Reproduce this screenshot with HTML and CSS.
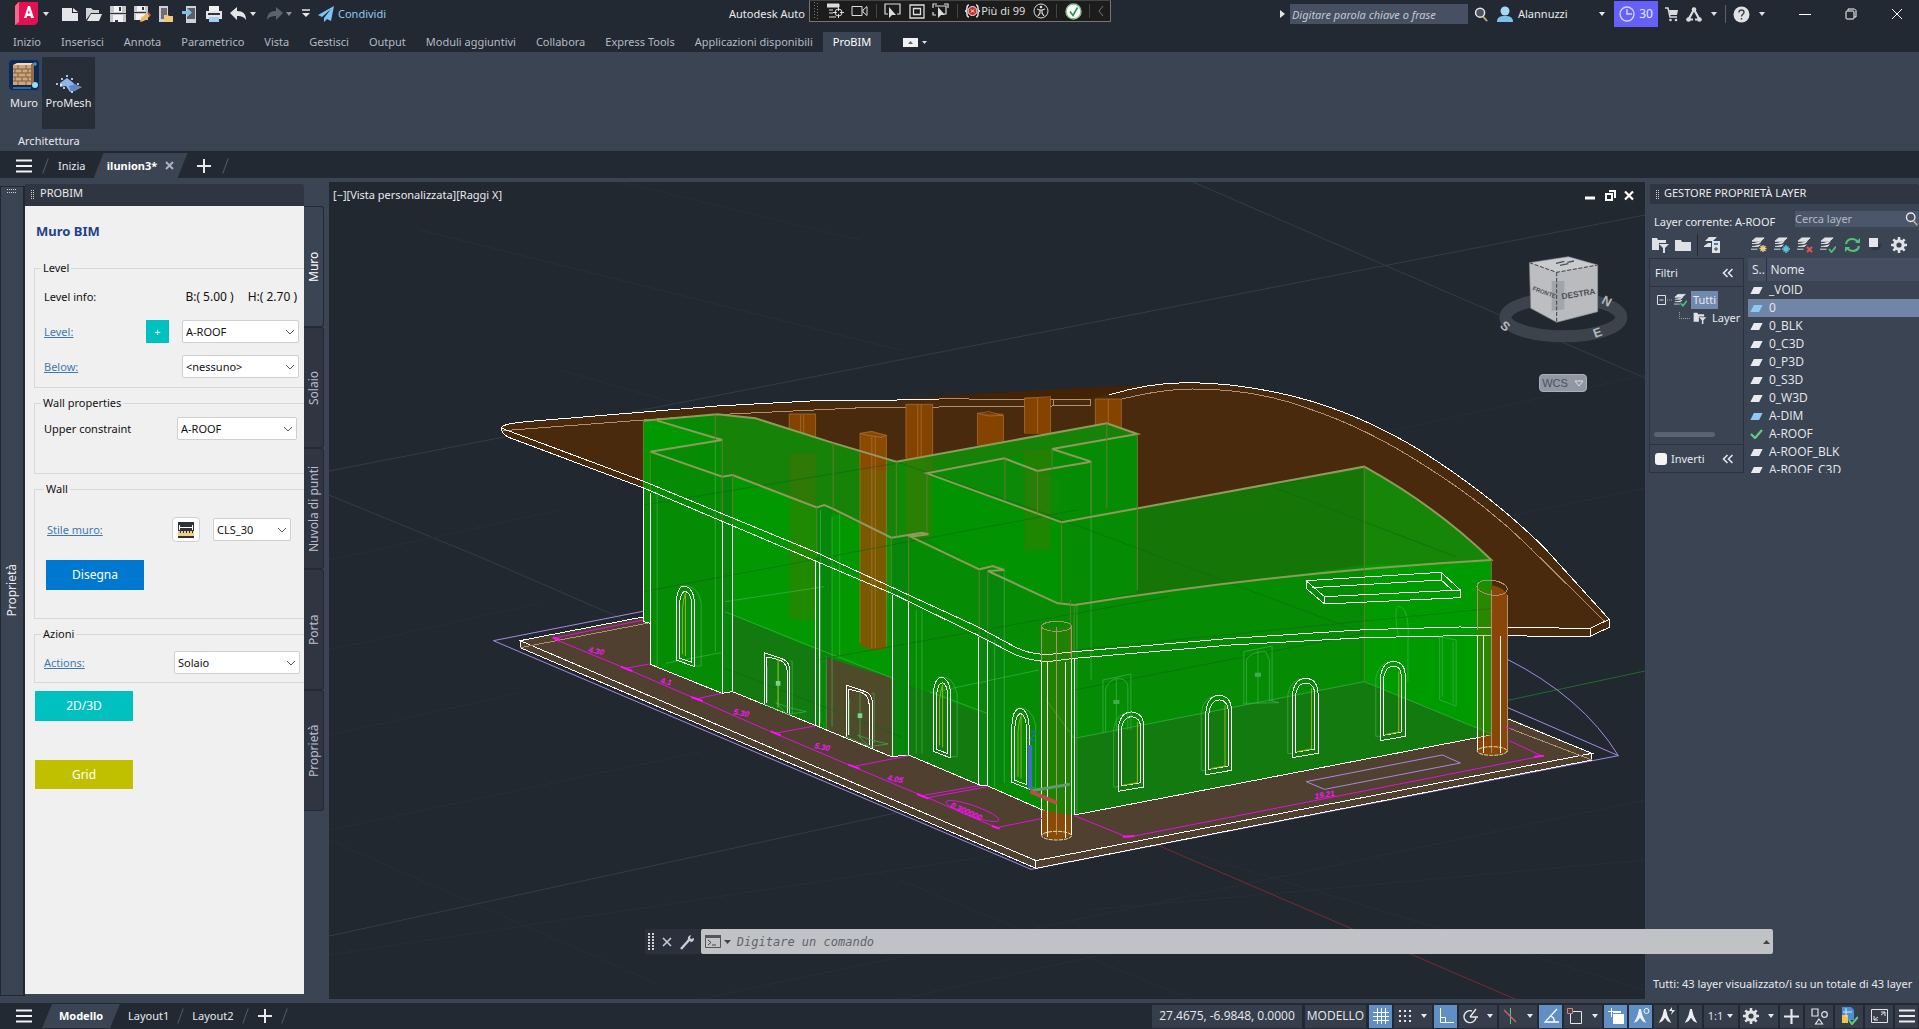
FILE: index.html
```html
<!DOCTYPE html>
<html lang="it">
<head>
<meta charset="utf-8">
<title>Autodesk AutoCAD - ilunion3</title>
<link rel="stylesheet" href="styles.css">
</head>
<body>
<svg class="defs" width="0" height="0" aria-hidden="true">
  <defs>
    <symbol id="tri" viewBox="0 0 8 8"><path d="M1 2h6L4 6z" fill="currentColor"/></symbol>
    <symbol id="menu" viewBox="0 0 16 16"><path d="M0 2.500h16M0 8h16M0 13.500h16" stroke="currentColor" stroke-width="2"/></symbol>
    <symbol id="plus" viewBox="0 0 14 14"><path d="M7 0v14M0 7h14" stroke="currentColor" stroke-width="2"/></symbol>
    <symbol id="chev" viewBox="0 0 10 6"><path d="M1 1l4 4 4-4" fill="none" stroke="#555" stroke-width="1"/></symbol>
    <symbol id="mag" viewBox="0 0 16 16"><path d="M9.500 10l4.500 5" stroke="#c9a27a" stroke-width="2"/><circle cx="6.500" cy="6" r="4.800" fill="#4a5260" stroke="#e4e6ea" stroke-width="1.600"/></symbol>
    <symbol id="dbl" viewBox="0 0 12 10"><path d="M5.500 1L1.500 5l4 4M10.500 1l-4 4 4 4" fill="none" stroke="#e4e6ea" stroke-width="1.600"/></symbol>
    <symbol id="sheet" viewBox="0 0 14 8"><path d="M4 0h10L10 8H0z" fill="currentColor"/></symbol>
    <symbol id="stack" viewBox="0 0 16 16"><path d="M5 1h9l-4 3.500H1zM1 7h7l3-2.500M1 10h7l2-2M0 13h7" fill="#e0e2e6" stroke="#e0e2e6" stroke-width="1"/></symbol>
    <symbol id="folder" viewBox="0 0 16 16"><path d="M0 3h6l1 2h9v9H0z" fill="#dfe1e5"/></symbol>
    <symbol id="gear" viewBox="0 0 16 16"><circle cx="8" cy="8" r="4.200" fill="none" stroke="#e0e2e6" stroke-width="3.200"/><path d="M8 0v3M8 13v3M0 8h3M13 8h3M2.300 2.300l2.200 2.200M11.500 11.500l2.200 2.200M2.300 13.700l2.200-2.200M11.500 4.500l2.200-2.200" stroke="#e0e2e6" stroke-width="2.500"/></symbol>
    <symbol id="compass" viewBox="0 0 18 18"><path d="M8 1h2l2 8 4 8-4-2-3-4-3 4-4 2 4-8z" fill="#eceef1"/></symbol>
  </defs>
</svg>

<div class="app">
  <header class="titlebar">
    <div class="quick">
      <button class="logo" aria-label="Menu applicazione"><svg width="24" height="26" viewBox="0 0 24 26"><path d="M3 1h20v20l-3 3H0V5z" fill="#e51050"/><path d="M0 5l4-4v20l-4 3z" fill="#ee6d8e"/><path d="M9 17l4-12h2l4 12h-3l-.6-2h-3.200l-.7 2zM12.800 12.500h2l-1-3.500z" fill="#fff" fill-rule="evenodd"/></svg></button>
      <svg class="caret" width="8" height="8"><use href="#tri"/></svg>
      <button class="qa qa-first" aria-label="Nuovo"><svg width="16" height="16" viewBox="0 0 16 16"><path d="M0 2h10v5h6v8H0z" fill="#e4e5e8"/><path d="M11 2l5 4h-5z" fill="#e4e5e8"/></svg></button>
      <button class="qa" aria-label="Apri"><svg width="16" height="16" viewBox="0 0 16 16"><path d="M0 14V2h5l2 2h6v3H5z" fill="#d0d2d6"/><path d="M5 8h11l-3 7H1z" fill="#e4e5e8"/></svg></button>
      <button class="qa" aria-label="Salva"><svg width="16" height="16" viewBox="0 0 16 16"><path d="M0 0h16v16H0z" fill="#c4c6ca"/><path d="M4 0h8v6H4zM3 9h10v7H3z" fill="#f3f3f5"/><path d="M9 1h2v4H9zM5 14h3v2H5zM0 7h16v1H0z" fill="#30363f"/></svg></button>
      <button class="qa" aria-label="Salva con nome"><svg width="17" height="17" viewBox="0 0 17 17"><path d="M0 0h14v14H0z" fill="#c4c6ca"/><path d="M3 0h8v5H3zM2 8h9v6H2z" fill="#f3f3f5"/><path d="M8 1h2v3H8zM0 6h12v1H0z" fill="#30363f"/><path d="M6 16l1-4 6-5 3 3-6 5z" fill="#f0b860"/><path d="M13 7l1-1 3 3-1 1z" fill="#e05a5a"/></svg></button>
      <button class="qa" aria-label="Apri da Web"><svg width="16" height="17" viewBox="0 0 16 17"><path d="M1 0h9v16H1z" fill="#cfd1d5"/><path d="M3 2h6v11H3z" fill="#6a6f78"/><path d="M6 9h4l1 1h4v6H6z" fill="#f3c87a"/></svg></button>
      <button class="qa" aria-label="Salva su Web"><svg width="16" height="17" viewBox="0 0 16 17"><path d="M4 0h10v17H4z" fill="#cfd1d5"/><path d="M5 2h8v11H5z" fill="#59606b"/><path d="M0 5h5V2l5 4.500L5 11V8H0z" fill="#7cc0ec"/></svg></button>
      <button class="qa" aria-label="Stampa"><svg width="16" height="17" viewBox="0 0 16 17"><path d="M3 0h10v5H3z" fill="#f0f0f2"/><path d="M0 5h16v8H0z" fill="#e4e5e8"/><path d="M2 7h12v2H2z" fill="#30363f"/><path d="M3 11h10v5H3z" fill="#9fd0f2"/></svg></button>
      <button class="qa" aria-label="Annulla"><svg width="17" height="14" viewBox="0 0 17 14"><path d="M0 6l7-6v4c6 0 9 3 9 9-2-3-4-4-9-4v4z" fill="#e4e5e8"/></svg></button>
      <svg class="caret" width="8" height="8"><use href="#tri"/></svg>
      <button class="qa dim" aria-label="Ripeti"><svg width="17" height="14" viewBox="0 0 17 14"><path d="M17 6l-7-6v4C4 4 1 7 1 13c2-3 4-4 9-4v4z" fill="#5c626c"/></svg></button>
      <svg class="caret dim" width="8" height="8"><use href="#tri"/></svg>
      <svg class="custom" width="10" height="10" viewBox="0 0 10 10"><path d="M1 1h8" stroke="#e4e5e8" stroke-width="1.500"/><path d="M1 4h8L5 8z" fill="#e4e5e8"/></svg>
      <button class="share"><svg width="16" height="16" viewBox="0 0 16 16"><path d="M16 0L0 9l4 2L13 3 6 12v4l3-3 4 2z" fill="#7cc4f4"/></svg>Condividi</button>
    </div>
    <div class="apptitle">Autodesk Auto</div>
    <div class="account">
      <svg class="tipr" width="5" height="10" viewBox="0 0 5 10"><path d="M0 1l5 4-5 4z" fill="#e4e5e8"/></svg>
      <input class="keyword" aria-label="Cerca" placeholder="Digitare parola chiave o frase">
      <svg class="amag" width="15" height="17"><use href="#mag"/></svg>
      <button class="user"><svg width="16" height="16" viewBox="0 0 16 16"><circle cx="8" cy="5" r="4.500" fill="#a8d8f8"/><path d="M0 16c0-5 3-6 8-6s8 1 8 6z" fill="#7cc0ec"/></svg><span>Alannuzzi</span><svg width="8" height="8"><use href="#tri"/></svg></button>
      <button class="trial"><svg width="16" height="16" viewBox="0 0 16 16"><circle cx="8" cy="8" r="7" fill="none" stroke="#d8d6ff" stroke-width="1.300"/><path d="M8 3v5h5" fill="none" stroke="#d8d6ff" stroke-width="1.300"/></svg>30</button>
      <svg width="13" height="15" viewBox="0 0 13 15"><path d="M0 1h3l2 9h7" fill="none" stroke="#d8dade" stroke-width="1.500"/><path d="M4 3h9l-1 5H5z" fill="#d8dade"/><circle cx="5.500" cy="13" r="1.300" fill="#d8dade"/><circle cx="11" cy="13" r="1.300" fill="#d8dade"/></svg>
      <svg class="adsk" width="16" height="15" viewBox="0 0 16 15"><path d="M8 2.500L2.500 12.500h11z" fill="none" stroke="#d8dade" stroke-width="2.200"/><circle cx="8" cy="2.500" r="2.300" fill="#d8dade"/><circle cx="2.500" cy="12.500" r="2.300" fill="#d8dade"/><circle cx="13.500" cy="12.500" r="2.300" fill="#d8dade"/><path d="M7 11h2v4H7z" fill="#222933"/></svg>
      <svg class="caret" width="8" height="8"><use href="#tri"/></svg>
      <span class="vline"></span>
      <svg class="help" width="17" height="17" viewBox="0 0 17 17"><circle cx="8.500" cy="8.500" r="8" fill="#e0e1e4"/><path d="M6 6.500q0-2.500 2.500-2.500T11 6.300q0 1.200-1.300 2T8.500 10.500M8.500 12v1.500" fill="none" stroke="#3a414c" stroke-width="1.400"/></svg>
      <svg class="caret" width="8" height="8"><use href="#tri"/></svg>
      <div class="winbtns">
        <button aria-label="Riduci"><svg width="12" height="12" viewBox="0 0 12 12"><path d="M0 6.500h12" stroke="#fff"/></svg></button>
        <button aria-label="Ripristina"><svg width="12" height="12" viewBox="0 0 12 12"><path d="M3 2.500V1h6.500L11 2.500V9H9.500" fill="none" stroke="#fff"/><rect x="1" y="3" width="8" height="8" rx="1" fill="none" stroke="#fff"/></svg></button>
        <button aria-label="Chiudi"><svg width="12" height="12" viewBox="0 0 12 12"><path d="M1 1l10 10M11 1L1 11" stroke="#fff"/></svg></button>
      </div>
    </div>
    <div class="recorder">
      <svg width="6" height="18" viewBox="0 0 6 18"><path d="M1.500 0v18M4.500 1v17" stroke="#777" stroke-dasharray="1 2"/></svg>
      <svg width="17" height="16" viewBox="0 0 17 16"><path d="M0 1h12v3H0zM2 7h4M2 10h4M2 14h7" fill="#ddd" stroke="#ddd"/><circle cx="11.500" cy="9.500" r="3.500" fill="none" stroke="#ddd"/><path d="M11.500 4v4M11.500 11v4M6 9.500h4M13 9.500h4" stroke="#ddd"/></svg>
      <svg width="17" height="12" viewBox="0 0 17 12"><path d="M1 1.500h10v9H1zM12 5l4-3.500v9L12 7z" fill="none" stroke="#ddd"/></svg>
      <i></i>
      <svg width="17" height="16" viewBox="0 0 17 16"><path d="M4 11H1V1h15v10h-3" fill="none" stroke="#ddd" stroke-width="1.200"/><path d="M5 4v11l3-3h4z" fill="#ddd"/></svg>
      <svg width="16" height="15" viewBox="0 0 16 15"><path d="M1 1h14v13H1zM4.500 4.500h7v6h-7z" fill="none" stroke="#ddd" stroke-width="1.300"/></svg>
      <svg width="17" height="16" viewBox="0 0 17 16"><path d="M1 5V1h4M12 1h4v4M1 9v3h3M3 3h11v8h-2" fill="none" stroke="#ddd" stroke-width="1.200"/><path d="M6 4v11l3-3h4z" fill="#ddd"/></svg>
      <i></i>
      <span class="over"><svg width="15" height="14" viewBox="0 0 15 14"><path d="M4 1Q2 1 2 4t-2 3q2 0 2 3t2 3M11 1q2 0 2 3t2 3q-2 0-2 3t-2 3" fill="none" stroke="#ddd" stroke-width="1.500"/><circle cx="7.500" cy="7" r="4.500" fill="#d02c2c" stroke="#eee"/><path d="M6 5.500l3 3M9 5.500l-3 3" stroke="#fff"/></svg>Più di 99</span>
      <svg width="16" height="16" viewBox="0 0 16 16"><circle cx="8" cy="8" r="7" fill="none" stroke="#ddd"/><circle cx="8" cy="4" r="1.300" fill="#ddd"/><path d="M4 6l3 1h2l3-1M7 7v3l-2 3M9 7v3l2 3" fill="none" stroke="#ddd" stroke-width="1.200"/></svg>
      <i></i>
      <svg width="17" height="17" viewBox="0 0 17 17"><circle cx="8.500" cy="8.500" r="7.500" fill="#fff" stroke="#7fc08a" stroke-width="1.500"/><path d="M5 8.500l3 4 4.500-8" fill="none" stroke="#23944a" stroke-width="1.600"/></svg>
      <i></i>
      <svg width="6" height="12" viewBox="0 0 6 12"><path d="M5 1L1 6l4 5" fill="none" stroke="#777"/></svg>
    </div>
  </header>

  <nav class="tabs">
    <a href="#">Inizio</a><a href="#">Inserisci</a><a href="#">Annota</a><a href="#">Parametrico</a><a href="#">Vista</a><a href="#">Gestisci</a><a href="#">Output</a><a href="#">Moduli aggiuntivi</a><a href="#">Collabora</a><a href="#">Express Tools</a><a href="#">Applicazioni disponibili</a><a href="#" class="on">ProBIM</a>
    <svg class="mini" width="24" height="9" viewBox="0 0 24 9"><path d="M0 0h15v9H0z" fill="#f2f2f4"/><path d="M5 6h5L7.500 3z" fill="#5a606a"/><path d="M19 3h5l-2.500 3z" fill="#dfe1e5"/></svg>
  </nav>

  <section class="ribbon">
    <div class="tools">
      <button class="tool"><svg width="32" height="32" viewBox="0 0 32 32"><rect x=".500" y=".500" width="31" height="31" rx="4" fill="#16284a" stroke="#1c4a86"/><path d="M5 6l4-2h16l-2 2z" fill="#f0ddc4"/><path d="M23 6l3-2v19l-3 3z" fill="#8d6d4d"/><path d="M5 6h18v20H5z" fill="#cfa67c"/><path d="M5 10h18M5 14h18M5 18h18M5 22h18M10 6v4M18 6v4M7 10v4M14 10v4M20 10v4M10 14v4M18 14v4M7 18v4M14 18v4M20 18v4M10 22v4M18 22v4" stroke="#7d5f45"/><path d="M5 29h18M27 3v4M25 5h4" stroke="#4ab6e8"/><circle cx="27" cy="26" r="3" fill="#8fe3f5"/></svg>Muro</button>
      <button class="tool active"><svg width="28" height="18" viewBox="0 0 28 18"><path d="M5 8l7-5 4 3 6 5 5 1-6 3-6 2-4-6-6 1z" fill="#8fb6ea"/><path d="M14 11l6-2 6 3-6 4-4 1z" fill="#5f86bd"/><path d="M12 0v2M7 3v2M2 8v2M17 3v2M9 12v2M23 8v2M17 16v2M6 9v2" stroke="#e8f2ff" stroke-width="1.500"/></svg>ProMesh</button>
    </div>
    <div class="group">Architettura</div>
  </section>

  <nav class="docs">
    <button class="burger" aria-label="Menu"><svg width="16" height="16"><use href="#menu"/></svg></button>
    <span class="slash"></span>
    <a href="#">Inizia</a>
    <a href="#" class="doc"><span>ilunion3*</span><svg width="9" height="9" viewBox="0 0 9 9"><path d="M1 1l7 7M8 1L1 8" stroke="#aeb4be" stroke-width="2"/></svg></a>
    <button class="add" aria-label="Nuova scheda"><svg width="14" height="14"><use href="#plus"/></svg></button>
    <span class="slash"></span>
  </nav>

  <main class="work">
    <aside class="strip"><svg class="grip" width="10" height="4" viewBox="0 0 10 4"><path d="M0 .500h10M0 3.500h10" stroke="#cfd3da" stroke-dasharray="1 1"/></svg><span class="vert">Proprietà</span></aside>
    <section class="palette">
      <h2><span class="dots"></span>PROBIM</h2>
      <form class="form">
        <h1>Muro BIM</h1>
        <fieldset class="f-level">
          <legend>Level</legend>
          <div class="row r-info"><span>Level info:</span><span class="lv">B:( 5.00 )</span><span class="hv">H:( 2.70 )</span></div>
          <div class="row"><label for="lev"><a href="#">Level:</a></label><button type="button" class="plus">+</button><span class="sel w117"><select id="lev"><option>A-ROOF</option></select><svg width="10" height="6"><use href="#chev"/></svg></span></div>
          <div class="row"><label for="bel"><a href="#">Below:</a></label><span class="sel w117"><select id="bel"><option>&lt;nessuno&gt;</option></select><svg width="10" height="6"><use href="#chev"/></svg></span></div>
        </fieldset>
        <fieldset class="f-prop">
          <legend>Wall properties</legend>
          <div class="row"><label for="upc">Upper constraint</label><span class="sel w120"><select id="upc"><option>A-ROOF</option></select><svg width="10" height="6"><use href="#chev"/></svg></span></div>
        </fieldset>
        <fieldset class="f-wall">
          <legend>Wall</legend>
          <div class="row"><label for="sty"><a href="#">Stile muro:</a></label><button type="button" class="ruler" aria-label="Stile"><svg width="16" height="16" viewBox="0 0 16 16"><path d="M0 0h16v16H0z" fill="#2b323c"/><path d="M0 9h16v5H0z" fill="#f3cd84"/><path d="M1 5.500h14M1.500 3v5M14.500 3v5" stroke="#fff"/><path d="M2.500 9v2M5.500 9v2M8.500 9v2M11.500 9v2M14.500 9v2" stroke="#2b323c"/></svg></button><span class="sel w78"><select id="sty"><option>CLS_30</option></select><svg width="10" height="6"><use href="#chev"/></svg></span></div>
          <button type="button" class="big blue">Disegna</button>
        </fieldset>
        <fieldset class="f-act">
          <legend>Azioni</legend>
          <div class="row"><label for="act"><a href="#">Actions:</a></label><span class="sel w126"><select id="act"><option>Solaio</option></select><svg width="10" height="6"><use href="#chev"/></svg></span></div>
        </fieldset>
        <button type="button" class="big teal">2D/3D</button>
        <button type="button" class="big olive">Grid</button>
      </form>
    </section>
    <nav class="side">
      <a href="#" class="on">Muro</a><a href="#">Solaio</a><a href="#">Nuvola di punti</a><a href="#">Porta</a><a href="#">Proprietà</a>
    </nav>

    <section class="view">
      <svg class="scene" viewBox="329 182 1316 817" preserveAspectRatio="xMidYMid slice">
        <!-- construction grid -->
        <g class="grid">
          <path class="hi" d="M329 471L1645 215M1193 182L1645 378M329 495L480 557 660 635M329 936L960 799"/>
          <path d="M329 560L560 510M329 650L540 603M329 735L520 693M329 830L700 752M329 955L1030 850M700 999L1645 800M900 999L1160 942M1300 560L1645 488M1350 440L1645 375M1090 910L1645 860M1180 850L1645 990M620 182L860 240M329 840L660 985M420 230L900 350M900 880L1190 999M560 370L700 410"/>
        </g>
        <path d="M1500 702L1645 671" stroke="#1f6b2c"/>
        <path d="M1155 844L1515 999" stroke="#7a2a33"/>

        <!-- building, drawn in model units -->
        <g class="model" transform="translate(480 370) scale(.38265 .33333)">
          <!-- base slab -->
          <path class="slab" d="M105 812L430 740 1500 600 2683 1040 2906 1150V1170L1453 1495 105 833z"/>
          <path class="vio" d="M430 723L35 812 1440 1498 2975 1157 2680 1010M2680 865Q2880 980 2975 1157"/>
          <path class="wh" d="M430 740L105 812 1453 1472 2906 1150 2683 1045M105 812V833L1453 1495V1472M1453 1495L2906 1170V1150"/>
          <path class="tan" d="M105 833L445 758M2690 1075L2906 1170"/>
          <!-- roof -->
          <path d="M1080 88Q1400 62 1743 45L1848 38 1660 130 1500 120z" fill="#432205"/>
          <path class="roof" d="M55 170Q60 160 120 155L620 108 880 92 1560 87Q1610 87 1660 66 1750 38 1848 38 2000 38 2165 91 2340 150 2503 275 2660 395 2783 535L2951 748V772L2901 799H2560L2313 803 1963 825 1553 865Q1460 880 1400 855L430 355 60 192z"/>
          <path class="tan" d="M60 182L600 135 1000 113 1500 108M1668 90Q1780 57 1863 57 2030 57 2163 115 2320 175 2473 290 2640 410 2763 555L2940 755M1500 90H1595V108H1500zM1200 86L1500 90"/>
          <!-- rear columns -->
          <path class="col" d="M808 132h69v120h-69zM1113 103h70v165h-70zM1300 130h68v105h-68zM1423 82h68v110h-68zM1608 87h68v95h-68z"/>
          <path class="tanl" d="M808 132h69V250M808 132V250M838 135V250M846 135V250M1113 103h70V265M1113 103V265M1144 103V265M1153 103V265M1300 130l30-5 38 12v90M1300 130l30 8 38-2M1300 130V225M1423 85l68-5V190M1423 85V190M1457 85V190M1608 87h68v90M1608 87v90M1642 87v90"/>
          <!-- walls -->
          <path fill="#068c04" d="M427 150L620 132 720 145 920 218 1088 275 1638 160 1718 192V415L2311 290Q2500 410 2643 570V1095L1553 1335 1480 1325 1327 1248 1305 1245 1120 1155 1075 1160 880 1068 660 965 633 970 445 883V760L427 755z"/>
          <path fill="#178208" d="M615 135L720 145 1088 275 1638 160 1718 192 1495 237 1370 265 1165 310V490L1075 500 880 412 660 315 633 320V210L615 200z"/>
          <path fill="#0a8f05" d="M1088 275L1165 262V490L1088 500z" opacity=".500"/>
          <path fill="#157607" d="M1520 455L1718 415 2311 290V585L1553 705 1520 690z"/>
          <path fill="#158607" d="M2311 290Q2500 410 2643 570L2311 585z"/>
          <path fill="#068c04" d="M1495 237L1718 192V415L1718 670 1553 700 1520 700V455L1595 275z"/>
          <path fill="#029802" d="M427 150L463 150 633 210 445 245V365L427 355zM660 315L880 412V560L1075 660V500L905 420V860L880 845 640 725 660 720zM905 560L1075 660V920L905 855z"/>
          <path fill="#009b00" d="M2311 585L2643 572V1095L2311 935z"/>
          <path fill="#137a10" d="M1553 1105L2311 935 2643 1092 1553 1335zM640 728L880 840V1068L660 965zM1120 945L1305 1030V1245L1120 1155z"/>
          <path fill="#0b8a08" d="M1165 310L1370 265 1520 330V455z"/>
          <path fill="#009600" d="M1165 310L1520 455V700L1305 600 1165 500z" opacity=".700"/>
          <path fill="#06860a" d="M633 320h28v645h-28zM880 412h40v655h-40zM1075 500h45v655h-45zM1305 598h65v645h-65z"/>
          <path fill="#4e4a2a" d="M905 862L1075 925V1160L905 1080z"/>
          <path fill="#7a5a00" d="M993 300V825Q1028 850 1062 835V215H993z"/>
          <path fill="#8a4a00" d="M993 190l30-6 39 12v104h-69z"/>
          <path class="tanl" d="M993 190l30-6 39 12-14 6-36-6zM993 190V820M1062 196V830M1024 200V835M1033 200V835"/>
          <path fill="#8a5a00" opacity=".220" d="M808 250h69v495q-35 15-69 0zM1423 240h68v300h-68zM1113 265h70v240h-70z"/>
          <!-- hidden edges seen through the walls -->
          <path class="lg" d="M640 725L885 838 1080 925M463 365V890M615 210V845M485 880L630 848M905 860V1075M920 440V1070M940 430V860M890 420V1060M1345 810V1250M1370 600V1240M1140 720V1150M1155 720V1150M1175 965L1325 1030M1180 968L1460 900M1553 1105L2311 935 2643 1092M1480 990L1553 1105M1597 275V930M1560 700V1330M640 695L900 650M2400 800Q2385 700 2405 710 2430 720 2425 820V935"/>
          <path class="dg" d="M427 405L1088 280M427 665L1560 420M880 870L1800 680M1718 415L2150 330M1553 840L2690 710M1088 275L1463 425 2311 790M640 895L1100 1100M2070 350L2550 560M1553 960L2311 790"/>
          <!-- wall heads -->
          <path class="tanw" d="M427 152L620 133 720 145 920 218 1088 275 1638 160 1718 192 1495 237 1597 275 1457 303 1370 265 1168 310 1520 457 2311 290Q2500 410 2643 570 2100 605 1553 705L1510 700 1327 603 1370 600 1340 588 1305 598 1125 500 1172 493 1155 488 1075 503 920 415 900 405 880 412 660 315 633 320 445 245 633 210 463 152"/>
          <path class="brn" d="M427 152V355M445 245V365M615 133V205M633 210V450M660 315V460M880 412V560M923 218V415M1088 275V500M1075 503V665M1120 500V690M1168 310V490M1372 265V390M1457 303V430M1520 457V700M1305 598V795M1327 603V810M1597 275V430M1495 237V300M1638 160V415M1718 192V660M2311 290V935M2643 570V780M1553 705V860M1543 690V860"/>
          <!-- roof fascia -->
          <path class="wh" d="M1200 89L880 92 620 108 120 155Q50 163 57 175L430 335 880 548 1300 770 1400 832Q1440 855 1490 853L1553 845 1963 805 2313 779 2560 771 2901 775 2951 748V772L2901 799V775M57 175Q55 190 75 202L430 355 1080 672 1300 795 1400 855Q1450 876 1490 874L1553 865 1963 825 2313 803 2560 797 2901 799M1643 75Q1750 38 1848 38 2000 38 2165 91 2340 150 2503 275 2660 395 2783 535L2951 748"/>
          <!-- front edges -->
          <path class="wh" d="M427 355V755L445 760M445 368V883L633 970 660 965 880 1068 1075 1160 1120 1155 1305 1245 1327 1248 1480 1325M1553 1335L2643 1095M633 452V970M661 462V965M876 570V1068M887 575V1070M1077 675V1160M1120 695V1155M1304 800V1245M1327 812V1248M1547 865V1335M1553 865V1335"/>
          <!-- skylight -->
          <path class="wh" d="M2159 632L2512 607 2562 660V683L2207 702 2159 655zM2159 632L2207 680 2562 660M2207 680V702M2175 653L2512 630 2540 660M2512 607V630"/>
          <path class="vio" d="M2159 1235L2515 1155 2562 1179 2207 1258z"/>
          <!-- windows and doors on the long side -->
          <g transform="translate(513 648)"><path class="lg" d="M10 0Q55-10 65 50V240H45"/><path class="wh" d="M0 222V50Q2 0 22 0 46 6 48 55V242zM8 216V55Q11 16 24 16 40 22 41 60V229z"/><path class="ye" d="M16 205V70Q18 40 24 22V210"/></g>
          <g transform="translate(1185 922)"><path class="lg" d="M10 0Q52-10 62 50V238H45"/><path class="wh" d="M0 222V50Q2 0 22 0 44 6 45 55V242zM8 216V55Q11 16 24 16 37 22 38 60V229z"/><path class="ye" d="M16 205V70Q18 40 24 22V210"/></g>
          <g transform="translate(1390 1015)"><path class="lg" d="M10 0Q52-10 62 50V238H45"/><path class="wh" d="M0 222V50Q2 0 22 0 44 6 45 55V242zM8 216V55Q11 16 24 16 37 22 38 60V229z"/><path class="ye" d="M16 205V70Q18 40 24 22V210"/></g>
          <g transform="translate(743 848)"><path class="wh" d="M0 155V0L50 20Q66 30 66 50V187M5 150V15Q15 12 45 25 60 35 60 60V180"/><path class="lg" d="M66 25H73V185M8 40V150M36 160V20M0 155L66 187M30 150l35 15 45 12-50 8z"/><path class="ye" d="M36 20V165"/><path d="M30 85h12v14h-12z" fill="#7fd48c"/></g>
          <g transform="translate(957 945)"><path class="wh" d="M0 155V0L50 20Q68 28 68 50V188M5 150V15Q15 12 45 25 60 35 60 60V180"/><path class="lg" d="M66 25H73V175M8 40V150M36 160V20M0 155L66 187M30 150l35 15 45 12-50 8z"/><path d="M30 85h12v14h-12z" fill="#7fd48c"/></g>
          <!-- windows on the short side -->
          <g transform="translate(1463 0)">
            <g transform="translate(205 1026)"><path class="lg" d="M0 225H-12V50Q-5 0 35 0"/><path class="wh" d="M0 238V50Q5 0 35 0 66 2 67 45V225zM8 222V55Q12 14 36 14 58 16 59 50V212z"/><path class="ye" d="M50 30V212L12 220"/></g>
            <g transform="translate(434 976)"><path class="lg" d="M0 225H-12V50Q-5 0 35 0"/><path class="wh" d="M0 238V50Q5 0 35 0 66 2 67 45V225zM8 222V55Q12 14 36 14 58 16 59 50V212z"/><path class="ye" d="M50 30V212L12 220"/></g>
            <g transform="translate(660 925)"><path class="lg" d="M0 225H-12V50Q-5 0 35 0"/><path class="wh" d="M0 238V50Q5 0 35 0 66 2 67 45V225zM8 222V55Q12 14 36 14 58 16 59 50V212z"/><path class="ye" d="M50 30V212L12 220"/></g>
            <g transform="translate(890 874)"><path class="lg" d="M0 225H-12V50Q-5 0 35 0"/><path class="wh" d="M0 238V50Q5 0 35 0 65 2 65 45V225zM8 222V55Q12 14 36 14 55 16 55 50V212z"/><path class="ye" d="M48 30V212L12 220"/></g>
            <path class="lg" d="M165 1090V930L238 912V1080M172 1085V960Q175 935 200 925 228 925 230 950V1080M200 925V1085M533 1005V845L607 828V995M540 1000V870Q550 845 590 845L600 870V995M570 840V1000M535 1000L625 998 600 990M1045 990V800L1088 810V1008zM1052 980V800M1080 1000V815"/>
            <path d="M192 990h16v12h-16zM562 908h16v12h-16z" fill="#3fae4c"/>
          </g>
          <!-- round pillars -->
          <path d="M1468 770V1330L1480 1325 1546 1335V770z" fill="#8a5a00" opacity=".200"/>
          <path d="M1468 1320L1546 1335V1395Q1507 1420 1468 1395z" fill="#8a4a08"/>
          <path d="M2606 640L2643 650V1095L2606 1103z" fill="#8a5a00" opacity=".300"/>
          <path d="M2643 645Q2680 655 2684 675V1145Q2645 1165 2606 1145V1105L2643 1095z" fill="#8a4608"/>
          <path class="tan" d="M1468 875V770M1546 770V875M1507 770V1395M2606 640V780M2643 660V1150M2684 675V1145"/>
          <ellipse class="tan" cx="1507" cy="769" rx="39" ry="15"/>
          <ellipse class="tan" cx="2645" cy="653" rx="40" ry="22" transform="rotate(10 2645 653)"/>
          <path class="wh" d="M1468 875V1395M1483 875V1400M1530 875V1405M1546 868V1395M2606 797V1140M2622 797V1150M2667 799V1150"/>
          <ellipse class="ye2" cx="1507" cy="1397" rx="39" ry="13"/>
          <ellipse class="ye2" cx="2645" cy="1143" rx="39" ry="13"/>
          <!-- dimensions -->
          <path class="mag" d="M427 750L190 805 380 895 565 987 770 1090 975 1190 1155 1277M380 895L443 882M565 987L632 970M770 1090L875 1068M975 1190L1120 1157M1155 1277L1305 1247M1170 1283L1327 1250M1170 1283L1350 1373 1470 1345M1553 1337L1693 1402 2775 1158 2690 1112M2680 1072l20 5"/>
          <path class="magb" d="M190 802l20 8M368 890l30 13M552 981l30 12M760 1084l26 12M962 1184l30 12M1142 1272l30 14M1338 1368l20 8M1680 1400l30-2M2755 1160l25-3"/>
          <ellipse class="mag" cx="1287" cy="1323" rx="74" ry="16" transform="rotate(22 1287 1323)"/>
          <!-- axes -->
          <path d="M1438 1125V1258" stroke="#3f6fc8" stroke-width="4"/>
          <path d="M1440 1262L1542 1243" stroke="#5f9a6c" stroke-width="3"/>
          <path d="M1438 1264L1508 1299" stroke="#c04a4a" stroke-width="4"/>
        </g>
        <g class="dims">
          <text x="588" y="652" transform="rotate(12 588 652)">4.30</text>
          <text x="660" y="683" transform="rotate(12 660 683)">4.1</text>
          <text x="733" y="714" transform="rotate(12 733 714)">5.30</text>
          <text x="814" y="748" transform="rotate(12 814 748)">5.30</text>
          <text x="887" y="780" transform="rotate(12 887 780)">4.05</text>
          <text x="950" y="807" transform="rotate(24 950 807)">0.300000</text>
          <text x="1315" y="799" transform="rotate(-9 1315 799)">19.21</text>
          <text class="zax" x="1029" y="741">Z</text>
        </g>
        <!-- view cube -->
        <g transform="translate(1480 180) scale(.33333)">
          <ellipse cx="250" cy="412" rx="174" ry="57" fill="none" stroke="#3c434d" stroke-width="36"/>
          <path d="M148 248L265 230 353 255V395L230 427 152 385z" fill="#bcbec1"/>
          <path d="M148 248L265 230 353 255 230 277z" fill="#c9cbcd"/>
          <path d="M230 277L353 255V395L230 427z" fill="#b9bbbe"/>
          <path d="M215 303h38v85l-38 5z" fill="#a2a5a9"/>
          <path d="M148 248L230 277 353 255M230 277V427" fill="none" stroke="#3b4047" stroke-width="3" stroke-dasharray="12 5"/>
          <path d="M148 248L265 230 353 255V395L230 427 152 385z" fill="none" stroke="#777b80" stroke-width="2"/>
          <path d="M228 250l25-6M240 256l25-5M262 247l20-4" stroke="#4b5057" stroke-width="4"/>
          <g class="cube">
            <text x="246" y="358" transform="rotate(-9 246 358)" font-size="25">DESTRA</text>
            <text x="156" y="330" transform="rotate(20 156 330)" font-size="18">FRONTE</text>
            <text class="ring" x="362" y="368" transform="rotate(28 362 368)">N</text>
            <text class="ring" x="58" y="440" transform="rotate(40 58 440)">S</text>
            <text class="ring" x="345" y="474" transform="rotate(-20 345 474)">E</text>
          </g>
        </g>
      </svg>
      <div class="viewbar">
        <span>[−][Vista personalizzata][Raggi X]</span>
        <svg width="49" height="11" viewBox="0 0 49 11"><path d="M0 8h10" stroke="#fff" stroke-width="3"/><path d="M24 1h6v7" fill="none" stroke="#fff" stroke-width="2"/><path d="M21 4h6v6h-6z" fill="none" stroke="#fff" stroke-width="2"/><path d="M40 1.500l8 8M48 1.500l-8 8" stroke="#fff" stroke-width="2.200"/></svg>
      </div>
      <button class="wcs">WCS<svg width="10" height="7" viewBox="0 0 10 7"><path d="M1 1h8L5 6z" fill="none" stroke="#ddd"/></svg></button>
      <div class="cmd">
        <svg width="6" height="18" viewBox="0 0 6 18"><path d="M1 0v18M5 0v18" stroke="#d0d2d6" stroke-width="2" stroke-dasharray="2 1"/></svg>
        <svg width="10" height="10" viewBox="0 0 10 10"><path d="M1 1l8 8M9 1L1 9" stroke="#c9ccd1" stroke-width="1.600"/></svg>
        <svg width="15" height="16" viewBox="0 0 15 16"><path d="M1 15L9 6" stroke="#c9ccd1" stroke-width="2.500"/><path d="M11 1Q7 2 8 6l3 2q3 0 3-4l-3 1-1-1z" fill="#c9ccd1"/></svg>
        <label class="cmdbox">
          <svg width="27" height="13" viewBox="0 0 27 13"><path d="M.5 .500h15v12H.5z" fill="none" stroke="#555"/><path d="M0 0h16v3H0z" fill="#555"/><path d="M3 5l3 2.500L3 10M7 10h4" fill="none" stroke="#444"/><path d="M19 5h7l-3.500 4z" fill="#444"/></svg>
          <input placeholder="Digitare un comando" aria-label="Comando">
          <svg width="8" height="6" viewBox="0 0 8 6"><path d="M0 5h7L3.500 1z" fill="#444"/></svg>
        </label>
      </div>
    </section>

    <aside class="layers">
      <h2><span class="dots"></span>GESTORE PROPRIETÀ LAYER</h2>
      <div class="cur"><span>Layer corrente: A-ROOF</span><span class="lsearch"><input placeholder="Cerca layer" aria-label="Cerca layer"><svg width="14" height="14"><use href="#mag"/></svg></span></div>
      <div class="lbar">
        <div class="lb1">
          <svg width="17" height="16" viewBox="0 0 17 16"><path d="M0 1h5l1 2h8v3H7v7H0z" fill="#dfe1e5"/><path d="M7 7h10l-4 4v5h-2v-5z" fill="#dfe1e5"/></svg>
          <svg width="16" height="16"><use href="#folder"/></svg>
          <i></i>
          <svg width="17" height="16" viewBox="0 0 17 16"><path d="M5 0h8L9 4H1zM0 9l4-3h3v4H0z" fill="#dfe1e5"/><path d="M8 4h8v12H8z" fill="#dfe1e5"/><path d="M10 6h4v2h-4z" fill="#3b7fc0"/><path d="M10 12h4M12 10v4" stroke="#3b4453"/></svg>
        </div>
        <div class="lb2">
          <svg width="16" height="16" viewBox="0 0 16 16"><use href="#stack" width="15" height="15"/><path d="M12 8v7M8.500 11.500h7M9.500 9l5 5M14.500 9l-5 5" stroke="#f7cf7a" stroke-width="1.300"/></svg>
          <svg width="16" height="16" viewBox="0 0 16 16"><use href="#stack" width="15" height="15"/><path d="M12 8v8M8 12h8M9.500 9.500l5 5M14.500 9.500l-5 5" stroke="#57c6dd" stroke-width="1.500"/></svg>
          <svg width="16" height="16" viewBox="0 0 16 16"><use href="#stack" width="15" height="15"/><path d="M10 10l5 5M15 10l-5 5" stroke="#e8524f" stroke-width="2"/></svg>
          <svg width="16" height="16" viewBox="0 0 16 16"><use href="#stack" width="15" height="15"/><path d="M9 12l2.500 3L16 9.500" fill="none" stroke="#4cc27a" stroke-width="1.800"/></svg>
          <svg width="17" height="16" viewBox="0 0 17 16"><path d="M2 7Q3 2 8.500 2q3 0 5 2.500M15 9q-1 5-6.500 5-3 0-5-2.500" fill="none" stroke="#4cc27a" stroke-width="2.200"/><path d="M16 1v5h-5zM1 15v-5h5z" fill="#4cc27a"/></svg>
          <svg width="16" height="16" viewBox="0 0 16 16"><path d="M8 8l6-2-3 7H2z" fill="#2e3541"/><path d="M1 1h9v9H1z" fill="#e4e5e8"/></svg>
          <svg width="16" height="16"><use href="#gear"/></svg>
        </div>
      </div>
      <div class="lbody">
        <div class="filters">
          <div class="fh">Filtri<svg width="12" height="10"><use href="#dbl"/></svg></div>
          <div class="tree">
            <div class="t1"><svg width="15" height="10" viewBox="0 0 15 10"><path d="M.5 .500h8v9h-8zM2.500 5h4" fill="none" stroke="#e0e2e6"/><path d="M10 5h5" stroke="#9aa0aa" stroke-dasharray="1 1"/></svg><svg width="13" height="14" viewBox="0 0 16 16"><use href="#stack" width="16" height="16"/><path d="M8 12l3 3 5-6" fill="none" stroke="#4cc27a" stroke-width="2"/></svg><span>Tutti</span></div>
            <div class="t2"><svg width="12" height="12" viewBox="0 0 12 12"><path d="M.5 0v6.500H12" fill="none" stroke="#9aa0aa" stroke-dasharray="1 1"/></svg><svg width="14" height="12" viewBox="0 0 17 16"><path d="M0 1h5l1 2h8v3H7v7H0z" fill="#dfe1e5"/><path d="M7 7h10l-4 4v5h-2v-5z" fill="#dfe1e5"/></svg><span>Layer</span></div>
          </div>
          <div class="hscroll"></div>
          <div class="ff"><label><input type="checkbox">Inverti</label><svg width="12" height="10"><use href="#dbl"/></svg></div>
        </div>
        <div class="ltwrap">
        <table class="ltable">
          <thead><tr><th class="c1">S..</th><th>Nome</th></tr></thead>
          <tbody>
            <tr><td><svg width="13" height="7"><use href="#sheet"/></svg></td><td>_VOID</td></tr>
            <tr class="sel-row"><td class="bl"><svg width="13" height="7"><use href="#sheet"/></svg></td><td>0</td></tr>
            <tr><td><svg width="13" height="7"><use href="#sheet"/></svg></td><td>0_BLK</td></tr>
            <tr><td><svg width="13" height="7"><use href="#sheet"/></svg></td><td>0_C3D</td></tr>
            <tr><td><svg width="13" height="7"><use href="#sheet"/></svg></td><td>0_P3D</td></tr>
            <tr><td><svg width="13" height="7"><use href="#sheet"/></svg></td><td>0_S3D</td></tr>
            <tr><td><svg width="13" height="7"><use href="#sheet"/></svg></td><td>0_W3D</td></tr>
            <tr><td class="bl"><svg width="13" height="7"><use href="#sheet"/></svg></td><td>A-DIM</td></tr>
            <tr><td><svg width="13" height="10" viewBox="0 0 13 10"><path d="M1 5l4 4 7-8" fill="none" stroke="#5fd08a" stroke-width="2.200"/></svg></td><td>A-ROOF</td></tr>
            <tr><td><svg width="13" height="7"><use href="#sheet"/></svg></td><td>A-ROOF_BLK</td></tr>
            <tr><td><svg width="13" height="7"><use href="#sheet"/></svg></td><td>A-ROOF_C3D</td></tr>
          </tbody>
        </table>
        </div>
      </div>
      <p class="total">Tutti: 43 layer visualizzato/i su un totale di 43 layer</p>
    </aside>
  </main>

  <footer class="bottom">
    <nav class="layouts">
      <button class="burger" aria-label="Menu"><svg width="16" height="16"><use href="#menu"/></svg></button>
      <a href="#" class="doc"><span>Modello</span></a>
      <a href="#">Layout1</a><span class="slash"></span>
      <a href="#">Layout2</a><span class="slash"></span>
      <button class="add" aria-label="Nuovo layout"><svg width="14" height="14"><use href="#plus"/></svg></button>
      <span class="slash"></span>
    </nav>
    <div class="status">
      <span class="cell coords">27.4675, -6.9848, 0.0000</span>
      <button class="cell modello">MODELLO</button>
      <button class="cell on" aria-label="Griglia"><svg width="16" height="16" viewBox="0 0 16 16"><path d="M4.500 0v16M8.500 0v16M12.500 0v16M0 4.500h16M0 8.500h16M0 12.500h16" stroke="#fff"/></svg></button>
      <button class="cell dd" aria-label="Snap"><svg width="14" height="14" viewBox="0 0 14 14"><path d="M1 2h14M1 7h14M1 12h14" stroke="#e4e6ea" stroke-width="2" stroke-dasharray="2 3"/></svg><svg class="c" width="8" height="8"><use href="#tri"/></svg></button>
      <button class="cell on" aria-label="Orto"><svg width="16" height="16" viewBox="0 0 16 16"><path d="M2.500 0v14.500H16M2 9.500h5.500V15" fill="none" stroke="#fff"/></svg></button>
      <button class="cell dd" aria-label="Polare"><svg width="16" height="16" viewBox="0 0 16 16"><path d="M14 9A6 6 0 1 1 10 3M8 9h8M8 9l6-8" fill="none" stroke="#e4e6ea" stroke-width="1.400"/></svg><svg class="c" width="8" height="8"><use href="#tri"/></svg></button>
      <button class="cell dd" aria-label="Isometrico"><svg width="16" height="16" viewBox="0 0 16 16"><path d="M8.500 0v16" stroke="#5fc47c"/><path d="M2 2l12 12" stroke="#d0656a" stroke-width="1.300"/></svg><svg class="c" width="8" height="8"><use href="#tri"/></svg></button>
      <button class="cell on" aria-label="Puntamento"><svg width="16" height="16" viewBox="0 0 16 16"><path d="M14 1L2 14h14M8 8q4 2 3 6" fill="none" stroke="#fff" stroke-width="1.300"/></svg></button>
      <button class="cell dd" aria-label="Osnap"><svg width="16" height="16" viewBox="0 0 16 16"><path d="M5 3.500h9.500v12h-11V6" fill="none" stroke="#e4e6ea"/><path d="M.5 .500h5v5h-5z" fill="#3b4453" stroke="#e0806a"/></svg><svg class="c" width="8" height="8"><use href="#tri"/></svg></button>
      <button class="cell on" aria-label="Selezione"><svg width="16" height="16" viewBox="0 0 16 16"><path d="M5 6h11v10H5zM5 3h8v2H5z" fill="#fff"/><path d="M3.500 0v9M0 3.500h7" stroke="#fff"/></svg></button>
      <button class="cell on" aria-label="Annotazioni"><svg width="18" height="18" viewBox="0 0 18 18"><use href="#compass" width="16" height="18"/><circle cx="14.500" cy="4" r="2.500" fill="none" stroke="#fff"/></svg></button>
      <button class="cell" aria-label="Scala automatica"><svg width="18" height="18" viewBox="0 0 18 18"><use href="#compass" width="16" height="18"/><path d="M15 0l-3 4h3l-1 4 4-5h-3z" fill="#e4e6ea"/></svg></button>
      <button class="cell" aria-label="Scala annotazione"><svg width="16" height="18"><use href="#compass"/></svg></button>
      <button class="cell scale">1:1<svg width="8" height="8"><use href="#tri"/></svg></button>
      <button class="cell dd" aria-label="Area di lavoro"><svg width="16" height="16"><use href="#gear"/></svg><svg class="c" width="8" height="8"><use href="#tri"/></svg></button>
      <button class="cell" aria-label="Monitor"><svg width="15" height="15" viewBox="0 0 14 14"><use href="#plus"/></svg></button>
      <button class="cell w" aria-label="Isola"><svg width="17" height="17" viewBox="0 0 17 17"><path d="M1 1h6v7H1zM8 11l3.500 5h-7z" fill="none" stroke="#e4e6ea" stroke-width="1.200"/><circle cx="13.500" cy="6.500" r="2.800" fill="none" stroke="#e4e6ea" stroke-width="1.200"/></svg></button>
      <button class="cell w" aria-label="Prestazioni"><svg width="17" height="18" viewBox="0 0 17 18"><path d="M1 0h9l3 3v10H1z" fill="#4d8fd0"/><path d="M1 8h6v8H1z" fill="#f3c24a"/><path d="M5 1v9M2 5h9" stroke="#d6eaff"/><path d="M8 13l3 4 6-7" fill="none" stroke="#5fd07a" stroke-width="2"/></svg></button>
      <button class="cell w" aria-label="Schermo intero"><svg width="17" height="14" viewBox="0 0 17 14"><path d="M.5 .500h16v13H.5z" fill="none" stroke="#e4e6ea"/><path d="M10 3h4v4M7 11H3V7M14 3l-4 3M3 11l4-3" fill="none" stroke="#e4e6ea"/></svg></button>
      <button class="cell" aria-label="Personalizza"><svg width="16" height="16"><use href="#menu"/></svg></button>
    </div>
  </footer>
</div>
</body>
</html>
```
FILE: styles.css
```css
* { box-sizing: border-box; }
body { margin: 0; background: #222933; color: #e8eaee; font: 11px/16px "Noto Sans", "Open Sans", sans-serif; overflow: hidden; }
button, input, select { font: inherit; color: inherit; border: 0; padding: 0; background: none; margin: 0; }
button { display: inline-flex; align-items: center; justify-content: center; }
a { color: inherit; text-decoration: none; }
svg { display: block; flex: none; }
h1, h2, p { margin: 0; font-weight: normal; }
.defs { position: absolute; }
.app { display: flex; flex-direction: column; height: 100vh; }

/* title bar */
.titlebar { display: flex; justify-content: space-between; height: 32px; padding-right: 16px; position: relative; }
.quick, .account { display: flex; align-items: center; height: 28px; }
.quick { padding-left: 15px; }
.caret { color: #dfe1e5; margin: 0 3px; }
.caret.dim { color: #8a9099; }
.qa { width: 16px; margin-right: 8px; }
.qa-first { margin-left: 9px; }
.qa + .caret { margin: 0 9px 0 -5px; }
.dim + .caret.dim { margin-right: 8px; }
.custom { margin-right: 7px; }
.share { color: #8ecbf5; gap: 4px; }
.apptitle { position: absolute; left: 729px; top: 6px; }
.recorder { position: absolute; left: 809px; top: 0; width: 302px; height: 22px; background: #1c1c1c; border: 1px solid #77756c; border-top-color: #444; display: flex; align-items: center; justify-content: space-between; padding: 0 6px 0 3px; color: #ddd; font-size: 11px; }
.recorder i { width: 1px; height: 14px; background: #444; }
.over { display: flex; align-items: center; gap: 1px; }
.account { gap: 8px; }
.keyword { width: 178px; height: 20px; background: #465062; padding: 0 2px; font-style: italic; margin-right: -2px; }
.keyword::placeholder { color: #c3c8d0; opacity: 1; }
.tipr { margin-right: -3px; }
.user { width: 109px; gap: 5px; }
.user span { flex: 1; text-align: left; }
.trial { width: 44px; height: 26px; background: #6660fb; gap: 4px; font-size: 12px; margin-right: -1px; }
.account .caret { margin: 0; }
.vline { width: 1px; height: 18px; background: #59606c; margin: 0 -1px; }
.winbtns { display: flex; gap: 34px; margin-left: 25px; }

/* ribbon */
.tabs { display: flex; height: 20px; padding-left: 3px; color: #b4bac4; align-items: center; }
.tabs a { padding: 0 10px; line-height: 20px; }
.tabs .on { background: #3b4453; color: #fff; }
.mini { margin-left: 22px; }
.ribbon { height: 99px; background: #3b4453; padding: 5px 6px 0; }
.tools { display: flex; height: 72px; }
.tool { flex-direction: column; justify-content: flex-start; gap: 4px; width: 36px; padding-top: 2px; }
.tool.active { width: 53px; background: #272e38; padding-top: 18px; gap: 2px; height: 72px; }
.group { padding: 4px 0 0 12px; }
.docs, .layouts { display: flex; align-items: center; }
.docs { height: 27px; padding: 2px 0 0; }
.burger { width: 48px; height: 24px; color: #f0f1f4; }
.slash { width: 1px; height: 16px; background: #525966; transform: rotate(20deg); }
.docs .slash { margin-right: 12px; margin-left: -3px; }
.doc { position: relative; display: flex; align-items: center; justify-content: center; gap: 8px; font-weight: bold; color: #fff; height: 25px; z-index: 0; }
.doc::before { content: ""; position: absolute; inset: 0; background: #3b4453; z-index: -1; clip-path: polygon(10px 0, 100% 0, calc(100% - 10px) 100%, 0 100%); }
.docs .doc { width: 94px; margin-left: 8px; }
.docs .add { width: 32px; margin-right: 8px; color: #e8eaee; }

/* work area */
.work { flex: 1; min-height: 0; display: grid; grid-template-columns: 25px 279px 25px minmax(0, 1fr) 274px; border-top: 4px solid #3b4453; border-bottom: 4px solid #3b4453; background: #3b4453; }
.strip { border: 1px solid #222933; border-right-width: 2px; display: flex; flex-direction: column; align-items: center; margin: 4px 0 3px; }
.grip { margin-top: 2px; }
.vert { writing-mode: vertical-rl; transform: rotate(180deg); margin-top: 371px; line-height: 20px; font-size: 12px; }
.palette { display: flex; flex-direction: column; padding: 2px 0 5px; }
.palette h2, .layers h2 { height: 22px; background: #2f3541; display: flex; align-items: center; gap: 6px; padding: 0 6px 4px; font-size: 11px; border-radius: 0 3px 0 0; }
.dots { width: 3px; height: 9px; margin-top: 3px; border-left: 1px dotted #d0d4da; border-right: 1px dotted #d0d4da; }
.form { flex: 1; min-height: 0; background: #f0f0f0; color: #111; padding-left: 9px; overflow: hidden; }
.form h1 { font-size: 13px; font-weight: bold; color: #1f4287; line-height: 50px; height: 54px; padding-left: 2px; }
fieldset { margin: 0 0 7px; padding: 0 5px 0 9px; border: 1px solid #d8d8d8; border-right: 0; min-width: 0; }
legend { padding: 0 2px; margin-left: -3px; }
.row { display: flex; align-items: center; height: 35px; }
.row label { flex: 1; }
.row a { color: #3f7aad; text-decoration: underline; }
.r-info span:first-child { flex: 1; }
.lv, .hv { font-size: 12px; }
.lv { margin-right: 14px; }
.r-info { padding-right: 2px; }
.f-level { height: 128px; padding-top: 3px; }
.f-prop { height: 79px; padding-right: 7px; }
.f-wall { height: 138px; padding: 15px 13px 0 12px; }
.f-act { height: 57px; padding-top: 3px; padding-right: 4px; }
.plus { width: 23px; height: 23px; background: #00c0c0; color: #fff; margin-right: 13px; }
.sel { display: grid; align-items: center; }
.sel select { grid-area: 1/1; appearance: none; width: 100%; height: 23px; background: #fff; border: 1px solid #cfcfcf; border-radius: 2px; padding: 0 3px; }
.sel svg { grid-area: 1/1; justify-self: end; margin-right: 4px; pointer-events: none; }
.w117 { width: 117px; }
.w120 { width: 120px; }
.w78 { width: 78px; }
.w126 { width: 126px; }
.ruler { width: 28px; height: 25px; background: #fff; border: 1px solid #cfcfcf; border-radius: 4px; margin-right: 13px; }
.big { display: flex; width: 98px; height: 30px; color: #fff; font-size: 12px; }
.blue { background: #0078d0; margin-top: 13px; margin-left: -1px; }
.teal { background: #00c0c0; margin: 8px 0 39px 1px; }
.olive { background: #c0c000; margin-left: 1px; height: 29px; }
.side { padding: 24px 5px 0 0; display: flex; flex-direction: column; }
.side a { height: 121px; background: #2f3541; border: 1px solid #232a34; border-right: 0; border-radius: 3px 0 0 3px; writing-mode: vertical-rl; transform: rotate(180deg); display: flex; align-items: center; justify-content: center; font-size: 12px; color: #b9bec8; }
.side .on { background: #3b4453; color: #fff; }

/* viewport */
.view { position: relative; background: #212830; }
.scene { position: absolute; inset: 0; width: 100%; height: 100%; }
.grid path { fill: none; stroke: #272e38; }
.grid .hi { stroke: #343c47; }
.model path, .model ellipse { vector-effect: non-scaling-stroke; }
.slab { fill: #4f4030; }
.roof { fill: #4a2a0c; }
.col { fill: #854300; }
.model .wh { fill: none; stroke: #fff; shape-rendering: crispEdges; }
.model .tan { fill: none; stroke: #b09070; shape-rendering: crispEdges; }
.model .tanl { fill: none; stroke: #b57b48; stroke-opacity: .600; }
.model .tanw { fill: none; stroke: #8f9a5c; stroke-width: 2px; }
.model .brn { fill: none; stroke: #6a7a30; }
.model .lg { fill: none; stroke: #3fb04a; stroke-opacity: .700; }
.model .dg { fill: none; stroke: #0b6a12; opacity: .600; }
.model .ye { fill: none; stroke: #9ab020; }
.model .ye2 { fill: none; stroke: #e8e8a0; stroke-dasharray: 4 1; }
.model .vio { fill: none; stroke: #a58ae0; }
.model .mag { fill: none; stroke: #e010e0; }
.model .magb { fill: none; stroke: #ff10ff; stroke-width: 2px; }
.dims { font: italic bold 8px "Liberation Sans", sans-serif; fill: #ff10ff; }
.dims .zax { fill: #2a6ab8; font-size: 14px; font-weight: normal; font-style: normal; }
.cube { font-family: "Liberation Sans", sans-serif; font-weight: bold; fill: #4b5057; }
.cube .ring { font-size: 38px; fill: #b4b7bb; }
.viewbar { position: relative; display: flex; justify-content: space-between; align-items: center; padding: 5px 11px 0 4px; }
.wcs { position: absolute; right: 58px; top: 192px; width: 48px; height: 18px; border-radius: 4px; background: #9298a3; border: 1px solid #aab0b8; color: #4b5260; gap: 6px; font-family: "Liberation Sans", sans-serif; }
.cmd { position: absolute; left: 24%; right: -128px; top: 747px; height: 25px; display: flex; align-items: center; gap: 8px; background: #2b313c; padding-left: 3px; z-index: 2; }
.cmdbox { flex: 1; height: 25px; background: #c0c2c5; border-radius: 2px; display: flex; align-items: center; gap: 5px; padding: 0 2px 0 4px; margin-left: -2px; }
.cmdbox input { flex: 1; font: italic 12px "DejaVu Sans Mono", "Liberation Mono", monospace; color: #555; }
.cmdbox input::placeholder { color: #606468; opacity: 1; }

/* layer manager */
.layers { display: flex; flex-direction: column; padding: 2px 0 0 4px; min-width: 0; }
.layers h2 { height: 20px; padding-bottom: 2px; margin-left: 1px; gap: 5px; }
.cur { display: flex; justify-content: space-between; height: 30px; padding: 7px 0 0 5px; white-space: nowrap; }
.cur > span:first-child { line-height: 22px; }
.lsearch { width: 124px; height: 16px; background: #4b566a; display: flex; align-items: center; }
.lsearch input { flex: 1; min-width: 0; }
.lsearch input::placeholder { color: #b4bac4; opacity: 1; }
.lbar { display: grid; grid-template-columns: 99px 1fr; height: 22px; align-items: center; margin-bottom: 2px; }
.lb1, .lb2 { display: flex; align-items: center; }
.lb1 { gap: 6px; padding-left: 3px; }
.lb1 i { width: 1px; height: 22px; background: #232a34; }
.lb2 { justify-content: space-between; padding: 0 12px 0 3px; }
.lbody { display: grid; grid-template-columns: 95px 1fr; column-gap: 4px; height: 215px; }
.filters { border: 1px solid #2c333f; display: flex; flex-direction: column; }
.fh, .ff { display: flex; align-items: center; justify-content: space-between; padding: 0 9px 0 5px; height: 28px; }
.fh { border-bottom: 1px solid #2c333f; }
.ff { border-top: 1px solid #2c333f; }
.ff label { display: flex; align-items: center; gap: 4px; }
.ff input { appearance: none; width: 12px; height: 12px; border-radius: 3px; background: #f4f4f4; }
.tree { padding: 4px 0 0 7px; flex: 1; overflow: hidden; }
.t1, .t2 { display: flex; align-items: center; height: 18px; gap: 2px; }
.t1 span { background: #7189ae; padding: 1px 2px; margin-left: 2px; }
.t2 { padding-left: 22px; }
.t2 span { margin-left: 3px; }
.hscroll { width: 61px; height: 5px; border-radius: 3px; background: #5a6372; margin: 0 0 7px 4px; }
.ltwrap { overflow: hidden; }
.ltable { width: 100%; border-collapse: collapse; font: 12px/18px "Open Sans", "Noto Sans", sans-serif; }
.ltable th { background: #454e60; text-align: left; font-weight: normal; height: 23px; padding: 0 4px; }
.ltable .c1 { width: 18px; padding: 0 0 0 4px; border-right: 1px solid #2c333f; }
.ltable td { height: 18px; padding: 0 0 0 2px; color: #e8eaee; }
.ltable td + td { padding-left: 3px; }
.ltable .bl { color: #8ec8f4; }
.sel-row { background: #7186a6; }
.total { margin-top: auto; padding: 0 0 7px 4px; white-space: nowrap; }

/* bottom bar */
.bottom { height: 26px; display: flex; justify-content: space-between; }
.layouts .doc { width: 78px; margin-left: -6px; margin-right: 8px; height: 24px; }
.layouts .slash { margin: 0 11px; }
.layouts .add { color: #e8eaee; width: 16px; }
.status { display: flex; align-items: center; gap: 2px; font-family: "Open Sans", "Noto Sans", sans-serif; padding-right: 1px; }
.cell { height: 23px; min-width: 23px; background: #363e4c; display: flex; align-items: center; justify-content: center; gap: 3px; }
.coords { width: 150px; margin-right: 1px; font-size: 12px; }
.modello { width: 61px; margin-right: 1px; font-size: 12px; }
.on.cell { background: #5f8fc4; }
.dd { width: 38px; gap: 8px; }
.scale { width: 34px; }
.cell.w { width: 28px; }
```
